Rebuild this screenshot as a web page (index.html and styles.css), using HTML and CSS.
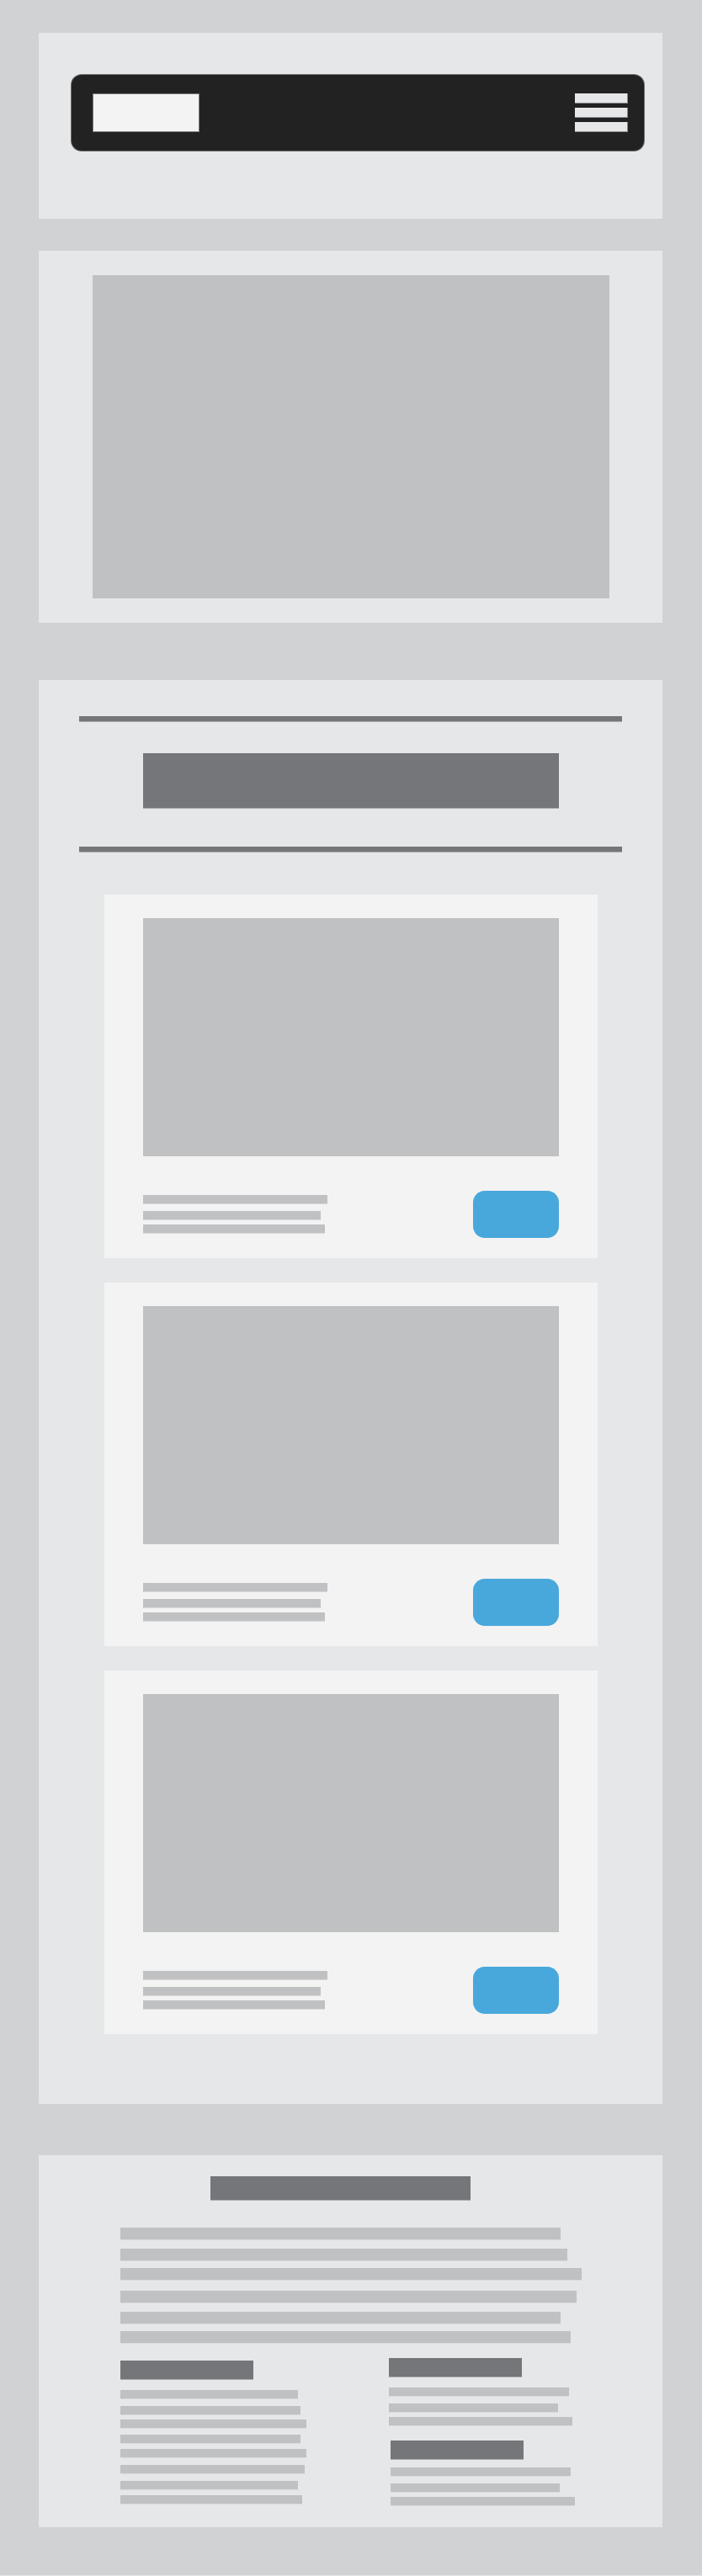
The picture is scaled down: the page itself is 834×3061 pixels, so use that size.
FILE: index.html
```html
<!DOCTYPE html>
<html>
<head>
<meta charset="utf-8">
<title>Wireframe</title>
<link rel="stylesheet" href="styles.css">
</head>
<body>
<div class="frame">
  <section class="panel panel-header">
    <nav class="navbar">
      <div class="logo"></div>
      <div class="burger"><span></span><span></span><span></span></div>
    </nav>
  </section>

  <section class="panel panel-hero">
    <div class="hero-img"></div>
  </section>

  <section class="panel panel-products">
    <div class="rule"></div>
    <div class="heading-block"></div>
    <div class="rule rule-2"></div>

    <div class="cards">
      <article class="card">
        <div class="card-img"></div>
        <div class="card-foot">
          <div class="card-text">
            <div class="bar" style="width:219px"></div>
            <div class="bar mt8" style="width:211px"></div>
            <div class="bar mt5" style="width:216px"></div>
          </div>
          <div class="btn"></div>
        </div>
      </article>
      <article class="card">
        <div class="card-img"></div>
        <div class="card-foot">
          <div class="card-text">
            <div class="bar" style="width:219px"></div>
            <div class="bar mt8" style="width:211px"></div>
            <div class="bar mt5" style="width:216px"></div>
          </div>
          <div class="btn"></div>
        </div>
      </article>
      <article class="card">
        <div class="card-img"></div>
        <div class="card-foot">
          <div class="card-text">
            <div class="bar" style="width:219px"></div>
            <div class="bar mt8" style="width:211px"></div>
            <div class="bar mt5" style="width:216px"></div>
          </div>
          <div class="btn"></div>
        </div>
      </article>
    </div>
  </section>

  <section class="panel panel-footer">
    <div class="foot-title"></div>
    <div class="para">
      <div class="pbar" style="width:523px"></div>
      <div class="pbar mt10" style="width:531px"></div>
      <div class="pbar mt8" style="width:548px"></div>
      <div class="pbar mt12" style="width:542px"></div>
      <div class="pbar mt10" style="width:523px"></div>
      <div class="pbar mt8" style="width:535px"></div>
    </div>
    <div class="cols">
      <div class="col col-left">
        <div class="sub-head"></div>
        <div class="bar mt12" style="width:211px"></div>
        <div class="bar mt8" style="width:214px"></div>
        <div class="bar mt5" style="width:221px"></div>
        <div class="bar mt7" style="width:214px"></div>
        <div class="bar mt6" style="width:221px"></div>
        <div class="bar mt8" style="width:219px"></div>
        <div class="bar mt8" style="width:211px"></div>
        <div class="bar mt6" style="width:216px"></div>
      </div>
      <div class="col col-right">
        <div class="sub-head"></div>
        <div class="bar mt12" style="width:214px"></div>
        <div class="bar mt8" style="width:201px"></div>
        <div class="bar mt5" style="width:218px"></div>
        <div class="sub-head shift mt17"></div>
        <div class="bar shift mt9" style="width:214px"></div>
        <div class="bar shift mt8" style="width:201px"></div>
        <div class="bar shift mt5" style="width:219px"></div>
      </div>
    </div>
  </section>
</div>
</body>
</html>
```

FILE: styles.css
```css
* { box-sizing: border-box; }

html, body {
  margin: 0;
  padding: 0;
  background: #d1d2d4;
  font-family: "Liberation Sans", Arial, sans-serif;
}

.frame {
  width: 834px;
  height: 3061px;
  background: #d1d2d4;
  border-radius: 3px 3px 0 0;
  border-bottom: 1px solid #e4e5e6;
  padding: 39px 47px 0 46px;
  display: flex;
  flex-direction: column;
}

.panel {
  background: #e6e7e8;
  flex: none;
}

/* header */
.panel-header {
  height: 221px;
  padding: 50px 22px 0 39px;
}

.navbar {
  height: 90px;
  background: #222222;
  border-radius: 12px;
  display: flex;
  align-items: center;
  justify-content: space-between;
  padding: 0 19px 0 25px;
  box-shadow: 0 0 0 1px #6e6e70;
}

.logo {
  width: 127px;
  height: 46px;
  background: #f3f3f3;
  border: 1px solid #7a7a7c;
}

.burger {
  width: 63px;
  display: flex;
  flex-direction: column;
  gap: 5px;
}

.burger span {
  display: block;
  height: 12px;
  background: #e6e7e8;
  border-right: 1px solid #8a8a8c;
  border-bottom: 1px solid #8a8a8c;
}

/* hero */
.panel-hero {
  margin-top: 38px;
  height: 442px;
  padding: 29px 0 0 64px;
}

.hero-img {
  width: 614px;
  height: 384px;
  background: #c0c1c3;
}

/* products */
.panel-products {
  margin-top: 68px;
  padding: 43px 0 83px 0;
}

.rule {
  height: 7px;
  margin: 0 48px;
  background: #75767a;
  border-bottom: 1px solid #a9aaac;
}

.heading-block {
  width: 494px;
  height: 66px;
  margin: 37px 0 0 124px;
  background: #75767a;
  border-bottom: 1px solid #a9aaac;
}

.rule-2 {
  margin-top: 45px;
}

.cards {
  margin-top: 50px;
  padding-left: 78px;
  display: flex;
  flex-direction: column;
  gap: 29px;
}

.card {
  width: 586px;
  height: 432px;
  background: #f3f3f3;
  padding: 28px 46px 0 46px;
}

.card-img {
  width: 494px;
  height: 283px;
  background: #c0c1c3;
}

.card-foot {
  margin-top: 41px;
  height: 56px;
  display: flex;
  align-items: center;
  justify-content: space-between;
}

.card-text {
  display: flex;
  flex-direction: column;
}

.bar {
  height: 11px;
  background: #c0c1c3;
  border-bottom: 1px solid #d9dadb;
  flex: none;
}

.btn {
  width: 102px;
  height: 56px;
  background: #48a8dc;
  border-radius: 14px;
}

/* footer */
.panel-footer {
  margin-top: 61px;
  height: 442px;
  padding: 25px 0 0 97px;
}

.foot-title {
  width: 309px;
  height: 29px;
  margin-left: 107px;
  background: #75767a;
  border-bottom: 1px solid #a9aaac;
}

.para {
  margin-top: 32px;
  display: flex;
  flex-direction: column;
}

.pbar {
  height: 15px;
  background: #c0c1c3;
  border-bottom: 1px solid #d9dadb;
}

.cols {
  margin-top: 17px;
  display: flex;
}

.col {
  display: flex;
  flex-direction: column;
}

.col-left {
  width: 319px;
  padding-top: 3px;
}

.sub-head {
  width: 158px;
  height: 23px;
  background: #75767a;
  border-bottom: 1px solid #a9aaac;
}

.shift { margin-left: 2px; }

.mt5 { margin-top: 5px; }
.mt6 { margin-top: 6px; }
.mt7 { margin-top: 7px; }
.mt8 { margin-top: 8px; }
.mt9 { margin-top: 9px; }
.mt10 { margin-top: 10px; }
.mt12 { margin-top: 12px; }
.mt17 { margin-top: 17px; }
```
